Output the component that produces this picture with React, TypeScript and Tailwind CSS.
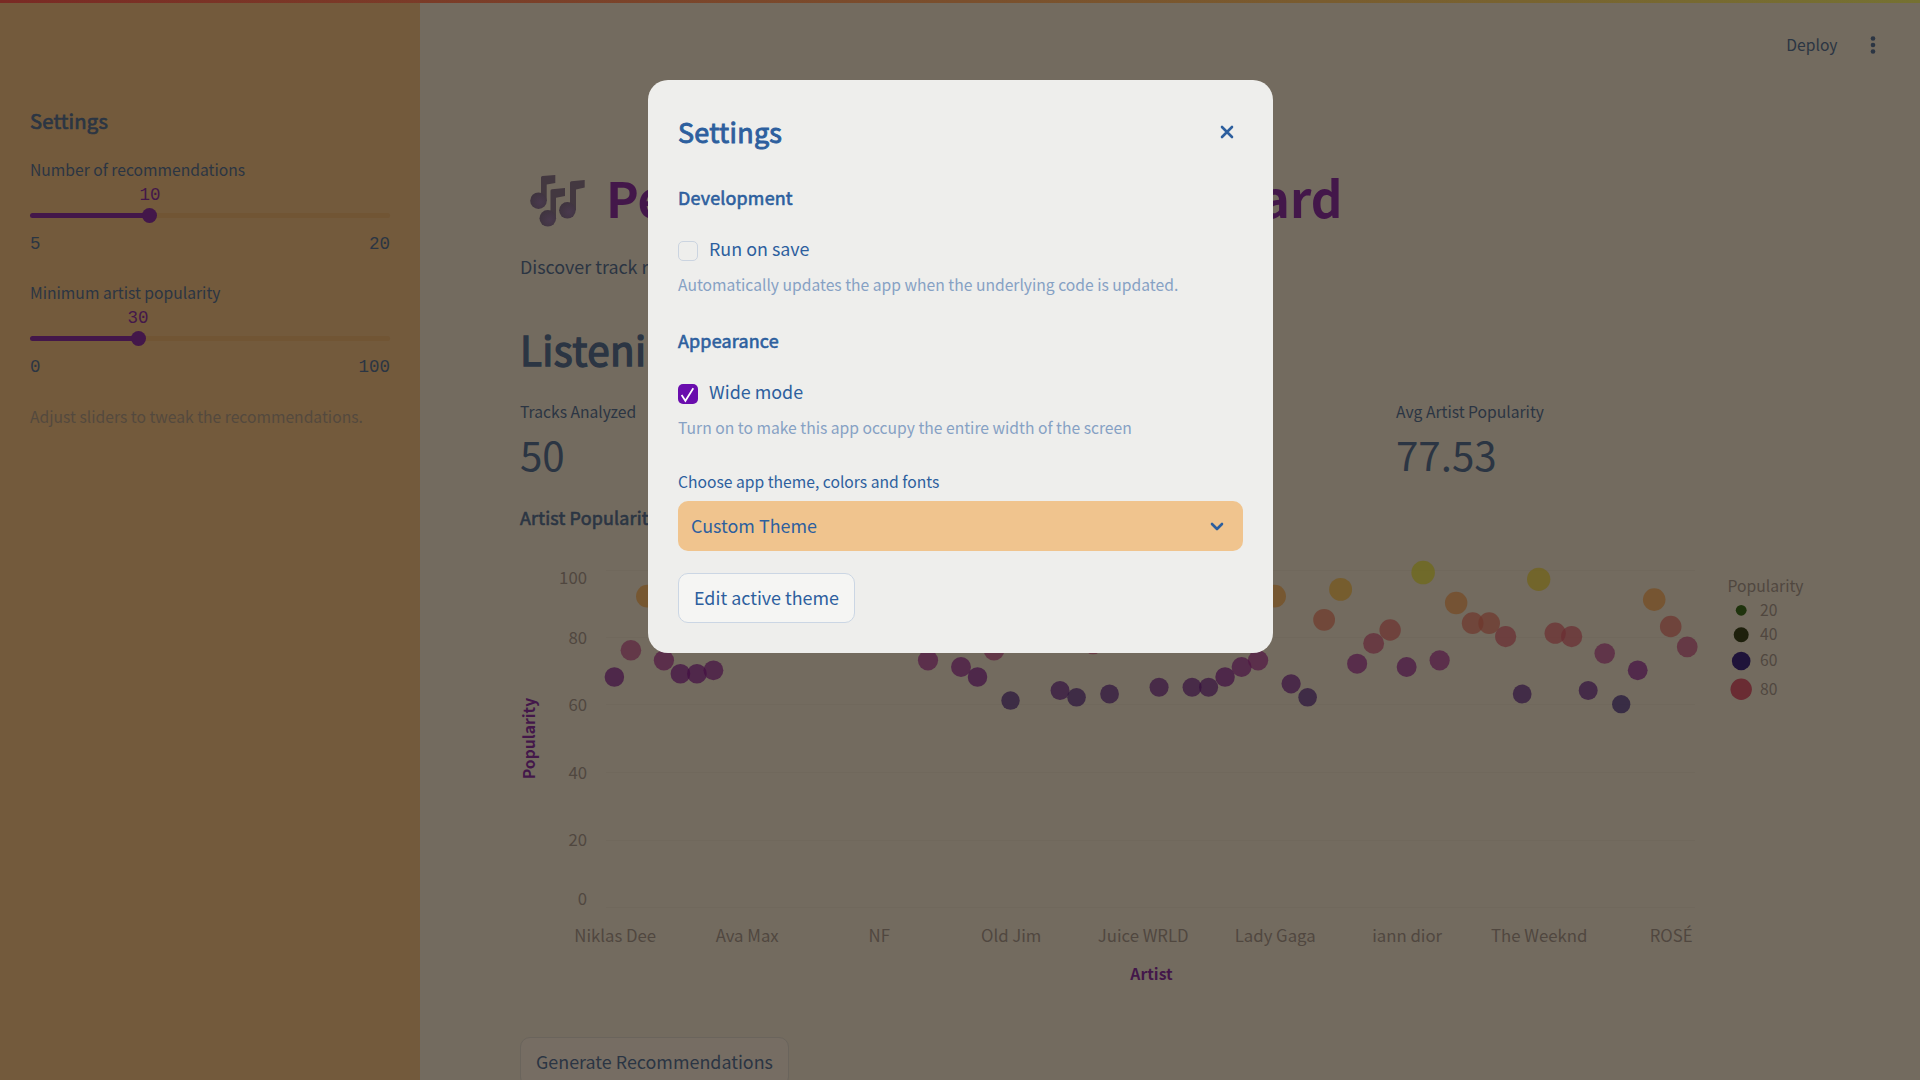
import React from "react";

const SANS = "[font-family:'Noto_Sans_CJK_SC',sans-serif]";
const MONO = "[font-family:'Liberation_Mono',monospace]";
const SEMI = "font-normal tracking-[0.011em] [-webkit-text-stroke:0.035em_currentColor]";

const points: [number, number][] = [
  [0, 677], [1, 650.2], [2, 596.2], [3, 660.3], [4, 673.7], [5, 673.7], [6, 670.3],
  [19, 660.3], [21, 667], [22, 677], [23, 650.2], [24, 700.6], [27, 690.5], [28, 697.3], [29, 643.8],
  [30, 694], [33, 687.3], [35, 687.3], [36, 687.3], [37, 677], [38, 667], [39, 660.3], [40, 596.2],
  [41, 683.8], [42, 697.3], [43, 619.8], [44, 589.4], [45, 663.7], [46, 643.4], [47, 630], [48, 667],
  [49, 572.6], [50, 660.3], [51, 603], [52, 623.2], [53, 623.2], [54, 636.6], [55, 694], [56, 579.3],
  [57, 633.2], [58, 636.6], [59, 690.5], [60, 653.5], [61, 704.2], [62, 670.3], [63, 599.6], [64, 626.5], [65, 646.8],
];

const stops: [number, number, number, number][] = [
  [60, 32, 18, 58], [65, 53, 16, 63], [69, 64, 11, 67], [73, 80, 21, 67], [76, 91, 33, 63], [80, 107, 43, 51],
  [84, 111, 53, 44], [86, 113, 59, 43], [92, 120, 77, 31], [95, 119, 90, 24], [99, 111, 106, 20],
];

function colorFor(v: number) {
  const x = Math.max(60, Math.min(98.9, v));
  const i = Math.max(0, stops.findIndex((s, k) => x >= s[0] && x < stops[k + 1][0]));
  const a = stops[i], b = stops[i + 1];
  const t = (x - a[0]) / (b[0] - a[0]);
  const mix = [1, 2, 3].map((c) => Math.round(a[c] + (b[c] - a[c]) * t));
  return `rgb(${mix.join(",")})`;
}

const yTicks: [string, number, number][] = [
  ["100", 584, 570.5], ["80", 644, 637.5], ["60", 711, 704.5], ["40", 779, 772.5], ["20", 846, 840.5], ["0", 905, 907.5],
];
const artists = ["Niklas Dee", "Ava Max", "NF", "Old Jim", "Juice WRLD", "Lady Gaga", "iann dior", "The Weeknd", "ROSÉ"];
const legend: [string, number, string, number][] = [
  ["20", 610.3, "#1f330d", 5.4], ["40", 634.8, "#1e200c", 7.5], ["60", 661, "#1f133a", 9.3], ["80", 689.3, "#6a2c33", 10.7],
];

function Chart() {
  return (
    <svg className="mt-[18px] block h-[470px] w-[1320px] overflow-visible" viewBox="520 550 1320 470">
      {yTicks.map(([t, y, g]) => (
        <g key={t}>
          <line x1="606" x2="1695" y1={g} y2={g} stroke="#70685c" />
          <text x="587" y={y} textAnchor="end" fontSize="16.75" fill="#50473f">{t}</text>
        </g>
      ))}
      {points.map(([k, y]) => {
        const v = (907.3 - y) / 3.37;
        return <circle key={k} cx={614.4 + 16.505 * k} cy={y} r={1.18 * Math.sqrt(v)} fill={colorFor(v)} fillOpacity="0.7" />;
      })}
      {artists.map((a, i) => (
        <text key={a} x={615.2 + 132 * i} y="942" textAnchor="middle" fontSize="16.75" fill="#50473f">{a}</text>
      ))}
      <text x="1151.5" y="980" textAnchor="middle" fontSize="15.7" fontWeight="700" fill="#43174a">Artist</text>
      <text transform="translate(535 738.5) rotate(-90)" textAnchor="middle" fontSize="15.7" fontWeight="700" fill="#43174a">Popularity</text>
      <text x="1727.5" y="592" fontSize="15.7" fill="#50473f">Popularity</text>
      {legend.map(([t, y, c, r]) => (
        <g key={t}>
          <circle cx="1741.2" cy={y} r={r} fill={c} />
          <text x="1760" y={y + 5.3} fontSize="15.7" fill="#50473f">{t}</text>
        </g>
      ))}
    </svg>
  );
}

function MusicNotes() {
  return (
    <svg className="-mb-[8px] h-[55px] w-[68px] shrink-0 overflow-visible" viewBox="523 168 68 55">
      <defs>
        <radialGradient id="head" cx="0.6" cy="0.6" r="0.6">
          <stop offset="0" stopColor="#49394d" />
          <stop offset="1" stopColor="#3f343f" />
        </radialGradient>
      </defs>
      <g fill="#433840">
        <path d="M541 175.5 Q541 174.2 542.5 174 L555.3 173 V181 L546.7 182.4 V199 H541 Z" />
        <path d="M550.5 188.8 Q550.5 187.4 552 187.2 L565 186 V194 L556 195.8 V216 H550.5 Z" />
        <path d="M570 180.8 Q570 179.4 571.5 179.2 L584.7 178 V185.6 L576 187.5 V208 H570 Z" />
      </g>
      <g fill="url(#head)">
        <circle cx="538.5" cy="198.7" r="8.3" />
        <circle cx="547.8" cy="216.3" r="8.3" />
        <circle cx="567.4" cy="208.3" r="8.3" />
      </g>
    </svg>
  );
}

function Slider({ label, value, min, max, pct }: { label: string; value: string; min: string; max: string; pct: number }) {
  return (
    <div className="h-[123px]">
      <div className="h-[30px] text-[15.67px] leading-[30px]">{label}</div>
      <div className={`h-[22px] text-[17.5px] leading-[20px] text-[#43174a] ${MONO}`}>
        <span className="inline-block -translate-x-1/2" style={{ marginLeft: `${pct}%` }}>{value}</span>
      </div>
      <div className="mt-px flex h-[15px] items-center">
        <div className="h-[5px] rounded-l-full bg-[#43174a]" style={{ width: `${pct}%` }} />
        <div className="z-10 -mx-[7.5px] size-[15px] rounded-full bg-[#43174a]" />
        <div className="h-[5px] flex-1 rounded-r-full bg-[#715534]" />
      </div>
      <div className={`mt-[10px] flex justify-between text-[17.5px] leading-[22px] ${MONO}`}>
        <span>{min}</span>
        <span>{max}</span>
      </div>
    </div>
  );
}

function Metric({ label, value }: { label: string; value: string }) {
  return (
    <div>
      <div className="text-[15.67px] leading-[26px]">{label}</div>
      <div className="-mt-px text-[40.3px] leading-[60px]">{value}</div>
    </div>
  );
}

function Check({ on, label }: { on?: boolean; label: string }) {
  return (
    <div className="flex h-[30px] items-start">
      {on ? (
        <span className="mt-[7px] grid size-5 place-items-center rounded-[5px] bg-[#6a0dad]">
          <svg viewBox="0 0 20 20" className="size-5" fill="none" stroke="#fff" strokeWidth="1.7">
            <path d="M3.6 11 L7.4 16.8 L15.3 4.2" />
          </svg>
        </span>
      ) : (
        <span className="mt-[7px] size-5 rounded-[5px] border border-[#cbd4e0]" />
      )}
      <span className="ml-[11px] text-[17.9px] leading-[28px]">{label}</span>
    </div>
  );
}

export default function App() {
  return (
    <div className={`relative h-[1080px] w-[1920px] overflow-hidden bg-[#736b5f] text-[#2b3543] ${SANS}`}>
      <div className="flex h-full">
        <aside className="w-[420px] shrink-0 bg-[#735a3c] px-[30px] pt-[106px]">
          <h2 className={`text-[20.15px] leading-[30px] ${SEMI}`}>Settings</h2>
          <div className="pt-[19px]">
            <Slider label="Number of recommendations" value="10" min="5" max="20" pct={33.33} />
            <Slider label="Minimum artist popularity" value="30" min="0" max="100" pct={30} />
          </div>
          <p className="mt-px whitespace-nowrap text-[15.67px] leading-[30px] text-[#53493e]">Adjust sliders to tweak the recommendations.</p>
        </aside>
        <main className="flex-1 pl-[100px]">
          <header className="flex h-[90px] items-center justify-end pr-[42.5px]">
            <span className="text-[15.67px]">Deploy</span>
            <svg className="ml-[30px] h-5 w-[10px]" viewBox="0 0 10 20" fill="#2b3543">
              <circle cx="5" cy="3.5" r="2.3" /><circle cx="5" cy="10" r="2.3" /><circle cx="5" cy="16.5" r="2.3" />
            </svg>
          </header>
          <div className="flex h-[127px] items-end gap-[15px] pl-[3px]">
            <MusicNotes />
            <h1 className="whitespace-nowrap text-[49.2px] font-bold leading-[40px] text-[#43174a]">Personalized Music Dashboard</h1>
          </div>
          <p className="mt-[34px] whitespace-nowrap text-[17.9px] leading-[30px]">Discover track recommendations and insights based on your Spotify listening data.</p>
          <h2 className={`mt-[38px] text-[40.3px] leading-[60px] ${SEMI}`}>Listening Insights</h2>
          <div className="mt-[20px] grid grid-cols-[418px_418px_418px] gap-[20px]">
            <Metric label="Tracks Analyzed" value="50" />
            <Metric label="Unique Artists" value="38" />
            <Metric label="Avg Artist Popularity" value="77.53" />
          </div>
          <h3 className={`mt-[18px] text-[17.9px] leading-[30px] ${SEMI}`}>Artist Popularity</h3>
          <Chart />
          <button className="mt-[17px] h-[50px] w-[269px] rounded-[10px] border border-[#6a645c] bg-[#766d63] pb-[2px] text-[17.9px]">Generate Recommendations</button>
        </main>
      </div>
      <div className="absolute inset-x-0 top-0 h-[3px] bg-linear-to-r from-[#7a2a24] via-[#7a4f2d] to-[#757132]" />
      <section role="dialog" className="absolute left-[648px] top-[80px] h-[573px] w-[625px] rounded-[20px] bg-[#eeeeec] px-[30px] pt-[29px] text-[#2d5f9e]">
        <div className="flex h-[45px] items-center justify-between pr-[9px]">
          <h2 className={`text-[26.9px] leading-[45px] ${SEMI}`}>Settings</h2>
          <svg className="size-[14px]" viewBox="0 0 14 14" stroke="#2d5f9e" strokeWidth="2.6" strokeLinecap="round">
            <path d="M2 2 L12 12 M12 2 L2 12" />
          </svg>
        </div>
        <h3 className={`mt-[28px] text-[17.9px] leading-[30px] ${SEMI}`}>Development</h3>
        <div className="mt-[22px]"><Check label="Run on save" /></div>
        <p className="mt-[6px] text-[15.67px] leading-[30px] text-[#86a1c4]">Automatically updates the app when the underlying code is updated.</p>
        <h3 className={`mt-[25px] text-[17.9px] leading-[30px] ${SEMI}`}>Appearance</h3>
        <div className="mt-[22px]"><Check on label="Wide mode" /></div>
        <p className="mt-[6px] text-[15.67px] leading-[30px] text-[#86a1c4]">Turn on to make this app occupy the entire width of the screen</p>
        <p className="mt-[24px] text-[15.67px] leading-[30px]">Choose app theme, colors and fonts</p>
        <div className="mt-[4px] flex h-[50px] items-center justify-between rounded-[10px] bg-[#f0c48e] pl-[13px] pr-[19px] text-[17.9px]">
          <span className="pb-[2px]">Custom Theme</span>
          <svg className="h-[9px] w-[14px]" viewBox="0 0 14 9" fill="none" stroke="#2d5f9e" strokeWidth="2.6" strokeLinecap="round" strokeLinejoin="round">
            <path d="M2 2 L7 7 L12 2" />
          </svg>
        </div>
        <button className="mt-[22px] h-[50px] w-[177px] rounded-[10px] border border-[#cbd6e4] bg-[#f5f5f3] pb-[2px] text-[17.9px]">Edit active theme</button>
      </section>
    </div>
  );
}
